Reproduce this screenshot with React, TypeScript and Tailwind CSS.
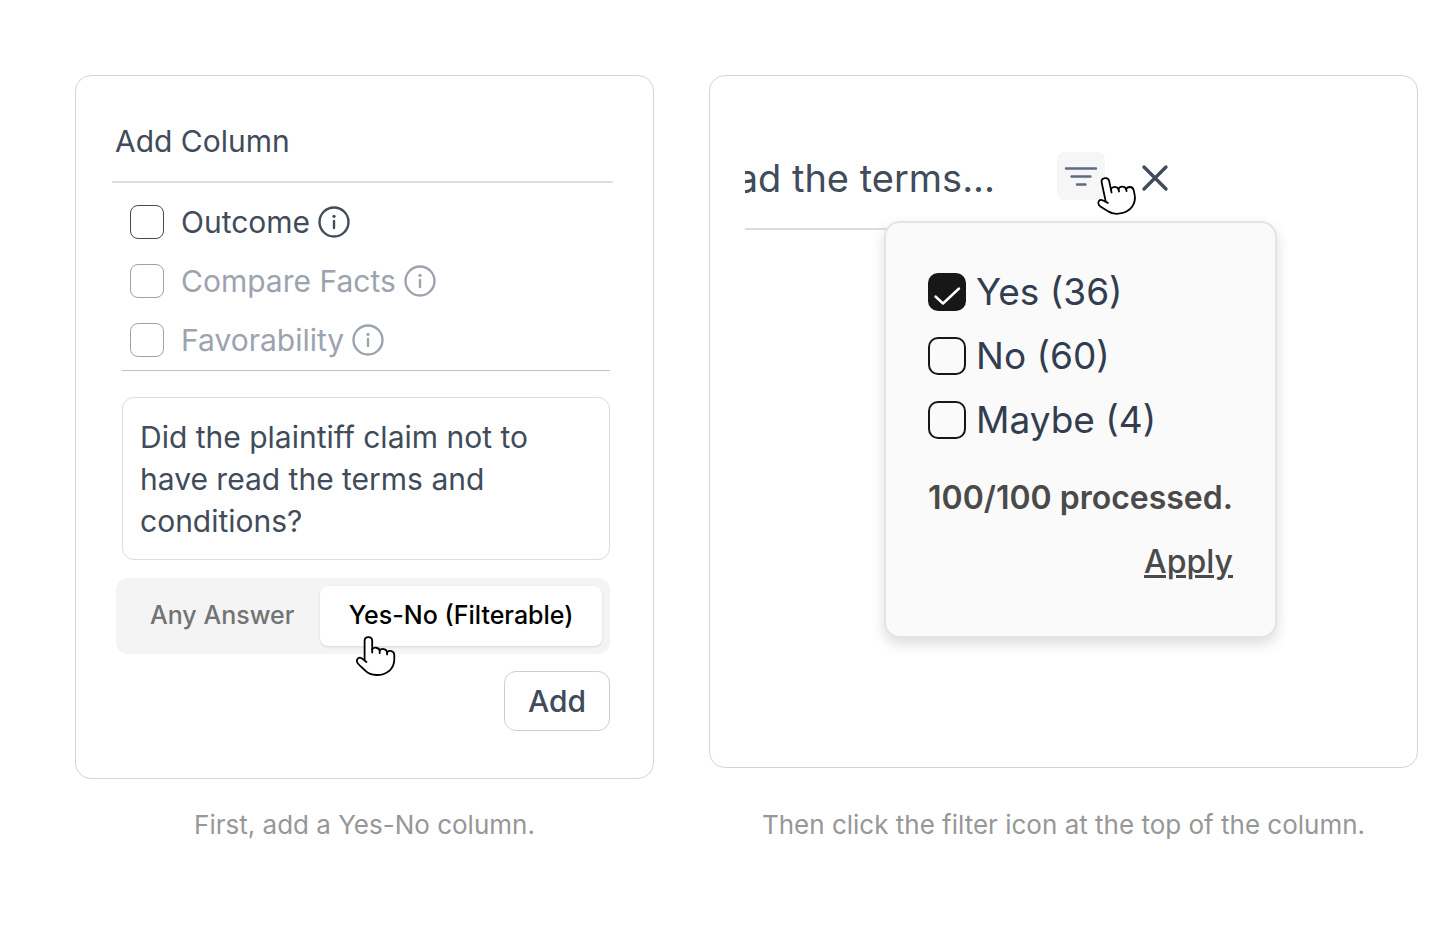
import { useState } from 'react'

interface ColumnOption {
  id: string
  label: string
  disabled: boolean
}

interface FilterOption {
  id: string
  label: string
  count: number
}

type AnswerType = 'any' | 'yes-no'

const columnOptions: ColumnOption[] = [
  { id: 'outcome', label: 'Outcome', disabled: false },
  { id: 'compare-facts', label: 'Compare Facts', disabled: true },
  { id: 'favorability', label: 'Favorability', disabled: true },
]

const answerTypes: { id: AnswerType; label: string }[] = [
  { id: 'any', label: 'Any Answer' },
  { id: 'yes-no', label: 'Yes-No (Filterable)' },
]

const filterOptions: FilterOption[] = [
  { id: 'yes', label: 'Yes', count: 36 },
  { id: 'no', label: 'No', count: 60 },
  { id: 'maybe', label: 'Maybe', count: 4 },
]

function InfoIcon() {
  return (
    <svg viewBox="0 0 32 32" className="size-8" fill="none" stroke="currentColor" aria-hidden="true">
      <circle cx="16" cy="16" r="14.5" strokeWidth="2.4" />
      <path d="M16 15v7" strokeWidth="2.4" strokeLinecap="round" />
      <circle cx="16" cy="10.3" r="1.6" fill="currentColor" stroke="none" />
    </svg>
  )
}

function HandCursor({ className }: { className: string }) {
  return (
    <svg
      viewBox="0 0 40 40"
      className={`pointer-events-none absolute size-10 ${className}`}
      fill="white"
      stroke="black"
      strokeWidth="1.8"
      strokeLinecap="round"
      strokeLinejoin="round"
      aria-hidden="true"
    >
      <path d="M10.4 26 5.8 22.4C3 20.4 0 23 1.2 26.2c.9 2.3 4.4 4.6 7.8 8.2 3 3 6.6 4.6 11.5 4.6C31.5 39 38.3 32.5 38.3 23v-4c0-4.6-5.6-5-7.2-2.6-.6-4-5.8-4.4-7.4-1.8-1-3.4-5.9-3.8-7.5-1.2V4.8c0-4.8-7.6-4.8-7.6 0v19.8" />
      <path d="M16.2 13.4v3.2M23.7 14.6v2.6M31.1 16.4v2" />
    </svg>
  )
}

function AddColumnCard() {
  const [selected, setSelected] = useState<string[]>([])
  const [question, setQuestion] = useState(
    'Did the plaintiff claim not to have read the terms and conditions?'
  )
  const [answerType, setAnswerType] = useState<AnswerType>('yes-no')

  const toggle = (id: string) => {
    setSelected((prev) => (prev.includes(id) ? prev.filter((item) => item !== id) : [...prev, id]))
  }

  return (
    <section className="rounded-2xl border border-[#d4d4d4] pt-[45px] pb-[47px] pl-9 text-[#414b5a]">
      <h2 className="mr-10 border-b-2 border-[#dedfe1] pb-5 pl-[3px] text-[30px] leading-[40px]">Add Column</h2>

      <div className="mr-[43px] ml-2.5 flex flex-col gap-[17px] border-b border-[#bcc2cb] pt-[18px] pb-[9px] pl-2">
        {columnOptions.map((option) => (
          <div
            key={option.id}
            className={`flex h-[42px] items-center gap-2 text-[30px] ${option.disabled ? 'text-[#9ca3af]' : ''}`}
          >
            <label className="flex items-center gap-[17px]">
              <input
                type="checkbox"
                checked={selected.includes(option.id)}
                disabled={option.disabled}
                onChange={() => toggle(option.id)}
                className="size-[34px] appearance-none rounded-lg border border-current bg-white checked:bg-[#171717]"
              />
              {option.label}
            </label>
            <InfoIcon />
          </div>
        ))}
      </div>

      <div className="mt-[26px] mr-[43px] ml-2.5 flex">
        <textarea
          aria-label="Question"
          rows={3}
          value={question}
          onChange={(e) => setQuestion(e.target.value)}
          className="min-w-0 grow resize-none overflow-hidden rounded-xl border border-[#dcdcdc] pt-[18px] pr-4 pb-[17px] pl-[17px] text-[30px] leading-[42px] outline-none"
        />
      </div>

      <div className="relative mt-[18px] mr-[43px] ml-1 flex rounded-xl bg-[#f4f4f4] p-2">
        {answerTypes.map((type) => (
          <button
            key={type.id}
            type="button"
            onClick={() => setAnswerType(type.id)}
            className={`h-[60px] cursor-pointer rounded-lg px-[26px] text-[25px] font-medium whitespace-nowrap ${
              answerType === type.id ? 'grow bg-white text-black shadow-sm' : 'text-[#737373]'
            }`}
          >
            {type.label}
          </button>
        ))}
        <HandCursor className="top-[58px] left-[240px]" />
      </div>

      <div className="mt-[17px] mr-[43px] flex justify-end">
        <button
          type="button"
          className="h-[60px] cursor-pointer rounded-xl border border-[#c9ced8] px-[23px] text-[30px] font-medium"
        >
          Add
        </button>
      </div>
    </section>
  )
}

function FilterMenu() {
  const [checked, setChecked] = useState<string[]>(['yes'])

  const toggle = (id: string) => {
    setChecked((prev) => (prev.includes(id) ? prev.filter((item) => item !== id) : [...prev, id]))
  }

  return (
    <div className="absolute top-[69px] left-[139px] w-[393px] rounded-2xl border-2 border-[#e4e4e4] bg-[#fafafa] px-[42px] pt-[45px] pb-[50px] shadow-[0_6px_14px_rgba(0,0,0,0.14)]">
      <div className="flex flex-col gap-4">
        {filterOptions.map((option) => (
          <label key={option.id} className="flex h-12 items-center gap-2.5 text-[37px] text-[#323d50]">
            <span className="relative flex">
              <input
                type="checkbox"
                checked={checked.includes(option.id)}
                onChange={() => toggle(option.id)}
                className="size-[38px] appearance-none rounded-[10px] border-2 border-[#171717] checked:bg-[#171717]"
              />
              {checked.includes(option.id) && (
                <svg
                  viewBox="0 0 38 38"
                  className="pointer-events-none absolute inset-0"
                  fill="none"
                  stroke="white"
                  strokeWidth="2.4"
                  strokeLinecap="round"
                  strokeLinejoin="round"
                  aria-hidden="true"
                >
                  <path d="m7.5 23.5 7.5 7L31 15.5" />
                </svg>
              )}
            </span>
            {option.label} ({option.count})
          </label>
        ))}
      </div>

      <p className="mt-[30px] text-[32px] leading-[48px] font-semibold whitespace-nowrap text-[#4a4a4a]">
        100/100 processed.
      </p>
      <div className="mt-4 flex justify-end">
        <button
          type="button"
          className="cursor-pointer text-[32px] leading-[48px] font-medium text-[#4a4a4a] underline"
        >
          Apply
        </button>
      </div>
    </div>
  )
}

function FilterCard() {
  return (
    <section className="mb-[11px] rounded-2xl border border-[#d4d4d4] pt-[76px] pl-[35px] text-[#414b5a]">
      <div className="relative">
        <div className="flex w-[424px] items-center">
          <div className="flex w-[250px] justify-end overflow-hidden text-[38px] leading-[52px] whitespace-nowrap">
            ad the terms...
          </div>
          <button
            type="button"
            aria-label="Filter"
            className="mb-1 ml-auto flex size-12 cursor-pointer items-center justify-center rounded-lg bg-[#f6f6f6]"
          >
            <svg
              viewBox="0 0 34 34"
              className="size-[34px]"
              fill="none"
              stroke="#5f6b7e"
              strokeWidth="2.4"
              strokeLinecap="round"
              aria-hidden="true"
            >
              <path d="M2 9.5h30M7.5 17.5h19M13 25.5h8.5" />
            </svg>
          </button>
          <button type="button" aria-label="Close" className="ml-9 cursor-pointer">
            <svg
              viewBox="0 0 28 28"
              className="size-7"
              fill="none"
              stroke="currentColor"
              strokeWidth="3.4"
              strokeLinecap="round"
              aria-hidden="true"
            >
              <path d="m3 3 22 22M25 3 3 25" />
            </svg>
          </button>
        </div>
        <div className="mt-6 w-[150px] border-t-2 border-[#dddddd]" />
        <HandCursor className="top-[23px] left-[351px] -rotate-12" />
        <FilterMenu />
      </div>
    </section>
  )
}

export default function App() {
  return (
    <main className="min-h-screen bg-white pt-[75px] pr-[38px] pl-[75px] font-['Inter',sans-serif]">
      <div className="grid grid-cols-[minmax(0,579fr)_minmax(0,709fr)] gap-x-[55px] gap-y-7">
        <AddColumnCard />
        <FilterCard />
        <p className="text-center text-[26px] leading-9 text-[#979797]">First, add a Yes-No column.</p>
        <p className="text-center text-[26px] leading-9 text-[#979797]">
          Then click the filter icon at the top of the column.
        </p>
      </div>
    </main>
  )
}
